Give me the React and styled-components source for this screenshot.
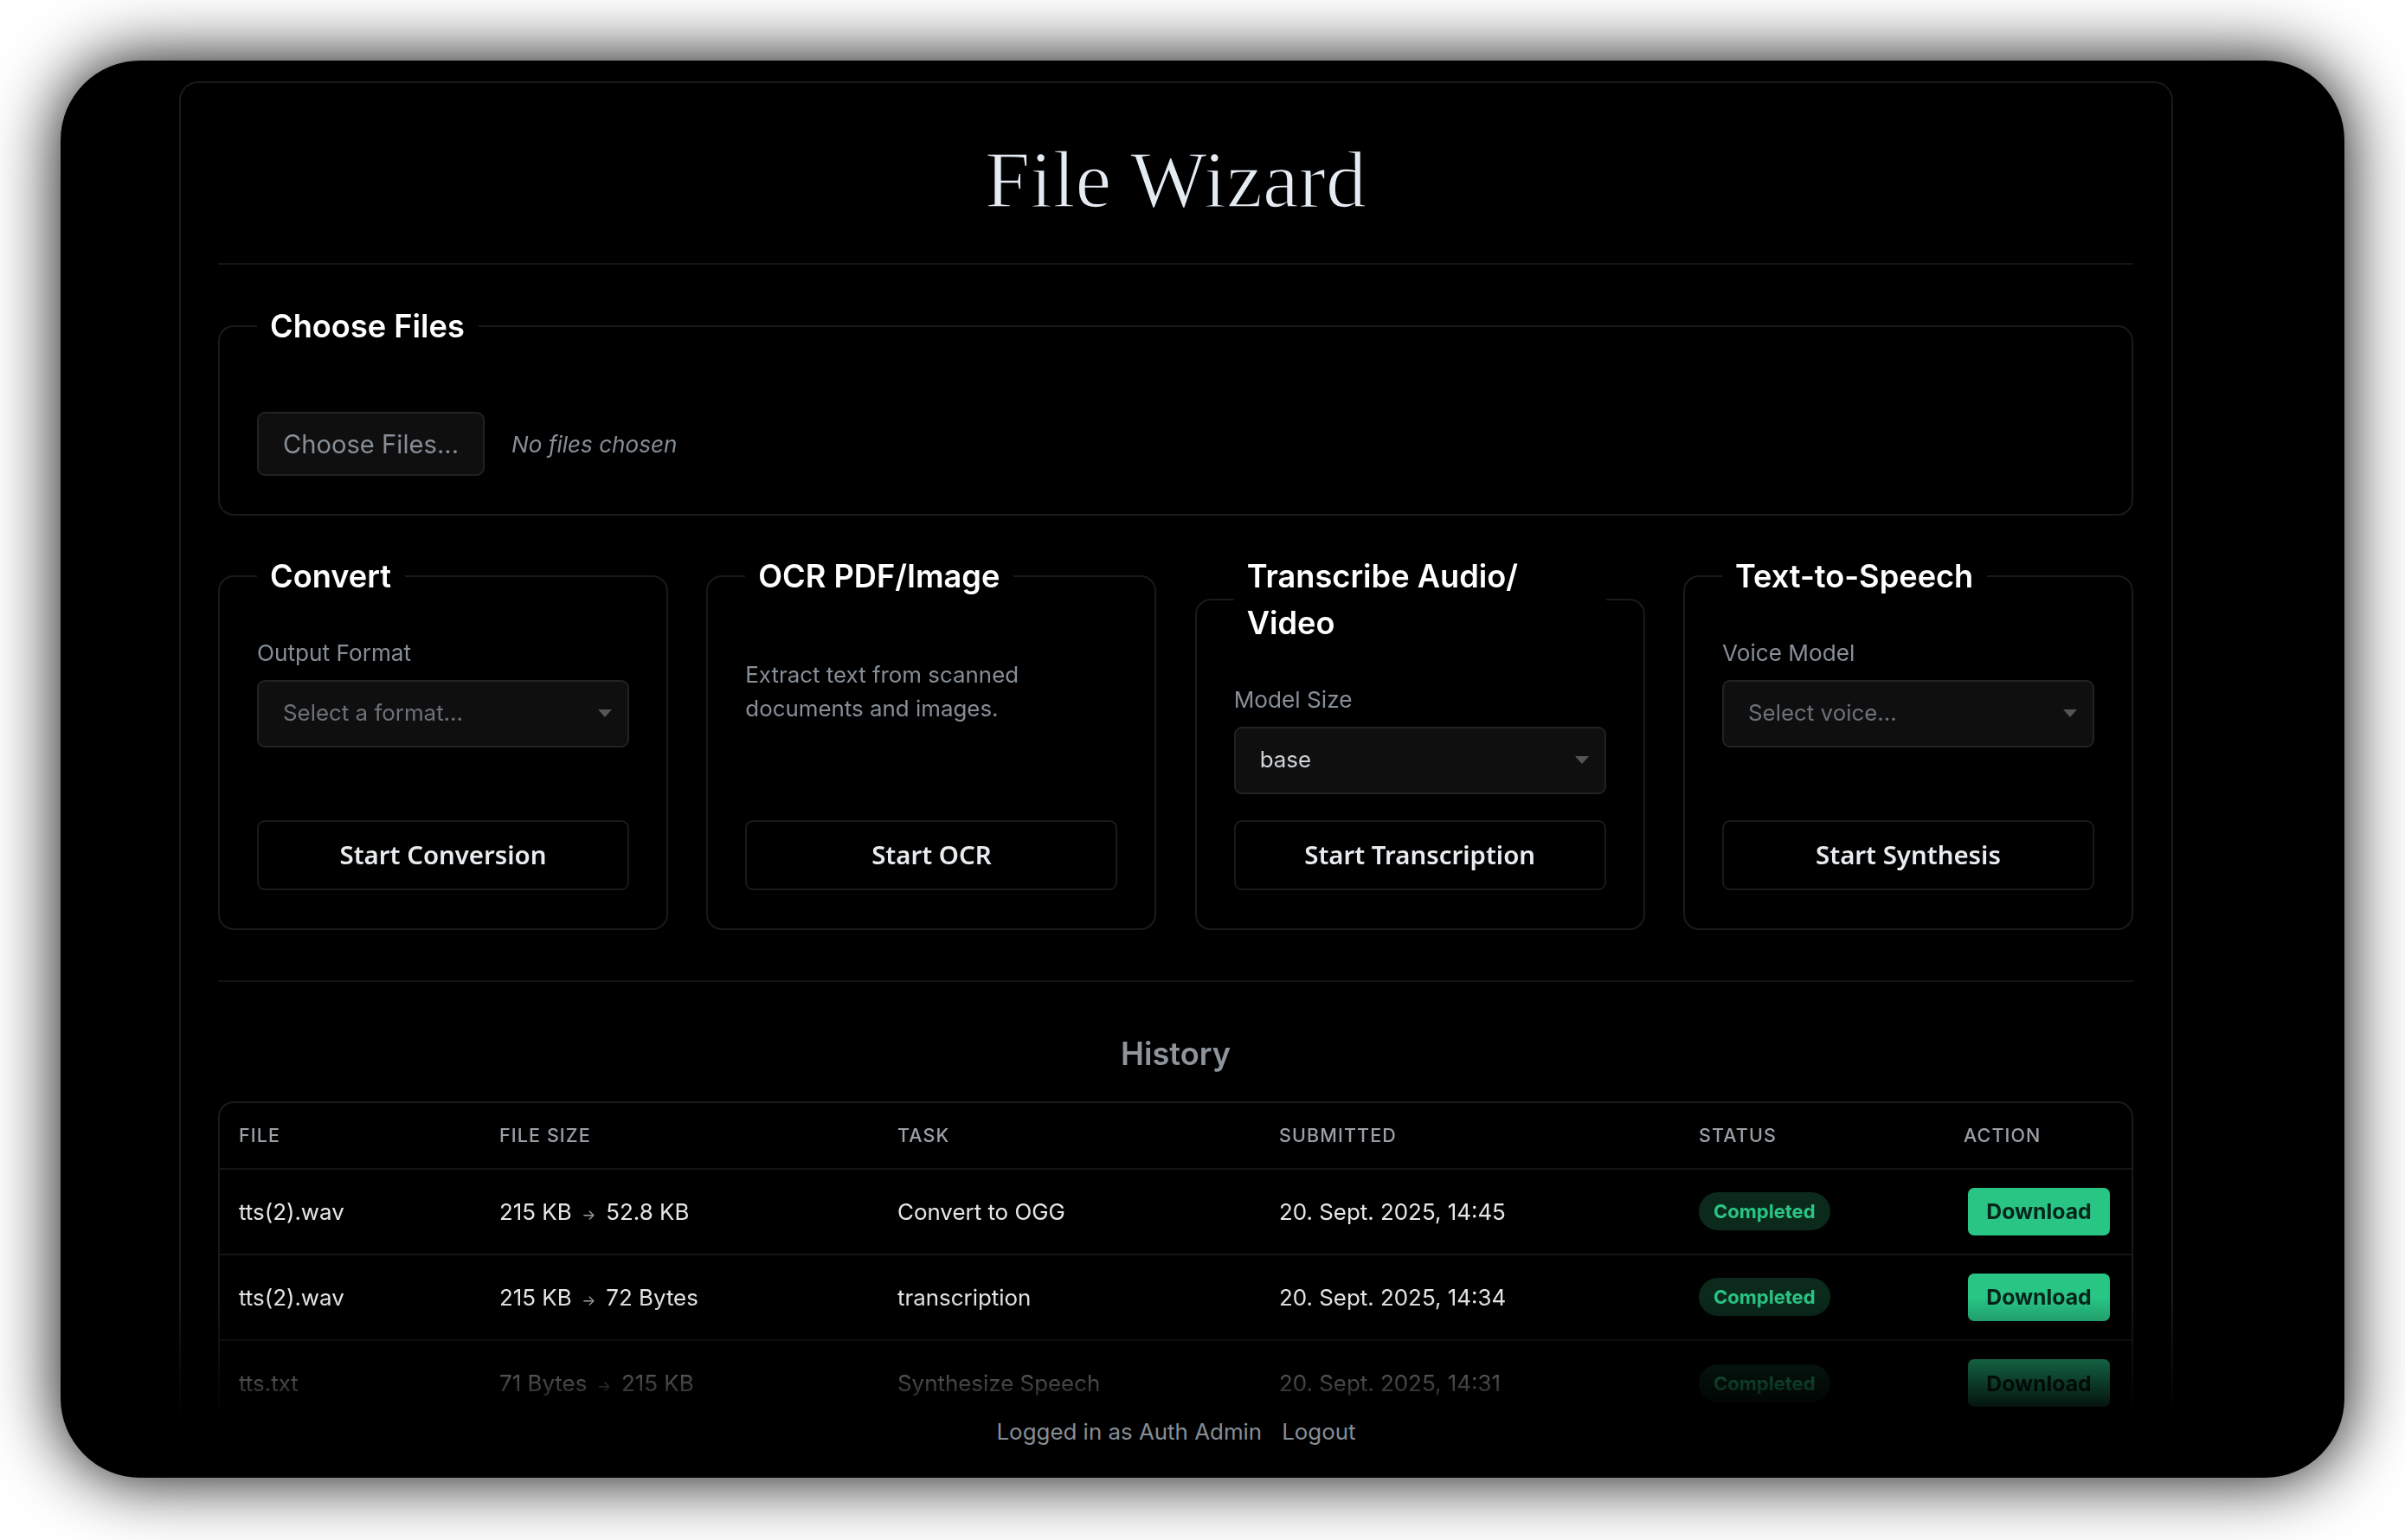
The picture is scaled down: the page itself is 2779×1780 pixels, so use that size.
import styled, { createGlobalStyle } from "styled-components"

const GlobalStyle = createGlobalStyle`
  html, body {
    margin: 0;
    padding: 0;
    background: #fff;
  }
  * {
    box-sizing: border-box;
  }
`

const Stage = styled.div`
  width: 2779px;
  height: 1780px;
  padding: 70px 70px 72px;
  overflow: hidden;
  font-family: Inter, "Liberation Sans", sans-serif;
`

const Screen = styled.div`
  height: 100%;
  display: flex;
  flex-direction: column;
  padding-right: 61px;
  background: #000;
  border-radius: 92px;
  box-shadow: 0 0 80px #000;
  overflow: hidden;
`

const Scroller = styled.div`
  height: 1570px;
  padding-top: 24px;
  overflow: hidden;
  mask-image: linear-gradient(to bottom, #000 1430px, transparent 1570px);
`

const Frame = styled.main`
  width: 2304px;
  margin: 0 auto;
  padding: 0 44px 80px 43px;
  border: 2px solid #1a1a1a;
  border-radius: 22px;
`

const Header = styled.header`
  height: 210px;
  padding-top: 14px;
  display: flex;
  align-items: center;
  justify-content: center;
  border-bottom: 2px solid #141414;
  margin-bottom: 44px;
`

const Title = styled.h1`
  margin: 0;
  font-family: "Liberation Serif", serif;
  font-size: 94px;
  font-weight: 400;
  color: #e4ebf2;
  -webkit-text-stroke: 1.6px #000;
`

const Panel = styled.fieldset`
  min-width: 0;
  margin: 0;
  padding: 42px 43px 44px;
  display: flex;
  flex-direction: column;
  border: 2px solid #1a1a1a;
  border-radius: 18px;
`

const PanelTitle = styled.legend`
  padding: 0 16px 0 15px;
  font-size: 36.2px;
  line-height: 54px;
  font-weight: 600;
  color: #fff;
`

const FileRow = styled.div`
  display: flex;
  align-items: center;
  gap: 31px;
  margin-top: 30px;
`

const FileButton = styled.button`
  width: 263px;
  height: 74px;
  background: #0f0f0f;
  border: 2px solid #222;
  border-radius: 9px;
  font: 400 29.2px Inter, sans-serif;
  color: #868e96;
`

const FileNote = styled.span`
  font-size: 26.1px;
  font-style: italic;
  color: #868e96;
`

const Tools = styled.div`
  display: grid;
  grid-template-columns: repeat(4, 1fr);
  gap: 44.3px;
  margin-top: 42.5px;
`

const Field = styled.div`
  margin-bottom: 30px;
`

const Label = styled.label`
  display: block;
  margin-bottom: 11px;
  font-size: 26.2px;
  line-height: 40px;
  color: #868e96;
`

const SelectWrap = styled.div`
  position: relative;

  &::after {
    content: "";
    position: absolute;
    right: 20px;
    top: 34px;
    border-left: 8px solid transparent;
    border-right: 8px solid transparent;
    border-top: 9px solid #555;
  }
`

const Select = styled.select`
  display: block;
  width: 100%;
  height: 78px;
  padding: 0 28px 2px;
  appearance: none;
  background: #0f0f0f;
  border: 2px solid #222;
  border-radius: 9px;
  font: 400 25.9px Inter, sans-serif;
  color: ${(p) => (p.$placeholder ? "#6c7278" : "#d0d4d8")};
`

const Blurb = styled.p`
  margin: 25px 0 30px;
  font-size: 25.9px;
  line-height: 39px;
  color: #868e96;
`

const StartButton = styled.button`
  width: 100%;
  height: 81px;
  margin-top: auto;
  background: #000;
  border: 2px solid #1a1a1a;
  border-radius: 9px;
  font: 600 29.4px "Noto Sans", sans-serif;
  color: #e9ecef;
`

const Rule = styled.hr`
  margin: 58px 0 0;
  border: 0;
  border-top: 2px solid #141414;
`

const HistoryTitle = styled.h2`
  margin: 57px 0 28px;
  text-align: center;
  font-size: 36.2px;
  line-height: 53px;
  font-weight: 600;
  color: #8d949b;
`

const TableWrap = styled.div`
  border: 2px solid #1a1a1a;
  border-radius: 18px;
  overflow: hidden;
`

const Table = styled.table`
  width: 100%;
  table-layout: fixed;
  border-collapse: collapse;
`

const Th = styled.th`
  height: 76px;
  padding: 0 22px;
  text-align: left;
  font-size: 21.5px;
  font-weight: 500;
  letter-spacing: 1.1px;
  text-transform: uppercase;
  color: #9aa0a6;
  border-bottom: 2px solid #141414;
`

const Row = styled.tr`
  & + & td {
    border-top: 2px solid #141414;
  }
`

const Td = styled.td`
  height: 99px;
  padding: 0 ${(p) => (p.$action ? "25px" : "22px")};
  text-align: ${(p) => (p.$action ? "right" : "left")};
  font-size: 25.9px;
  color: #e6e6e6;
`

const Arrow = styled.span`
  display: inline-block;
  width: 25px;
  text-align: center;
  font-size: 17px;
  color: #9aa0a6;
`

const Badge = styled.span`
  display: inline-flex;
  align-items: center;
  height: 44px;
  padding: 0 17px;
  background: #0b2a1c;
  border-radius: 22px;
  font-size: 22px;
  font-weight: 700;
  color: #2ac583;
`

const DownloadButton = styled.button`
  width: 164px;
  height: 55px;
  background: #28c585;
  border: 0;
  border-radius: 7px;
  font: 700 24.8px Inter, sans-serif;
  color: #06251a;
`

const Footer = styled.footer`
  display: flex;
  justify-content: center;
  gap: 23px;
  font-size: 25.9px;
  line-height: 30px;
  color: #868e96;
`

const columns = [
  ["File", 301],
  ["File Size", 460],
  ["Task", 441],
  ["Submitted", 485],
  ["Status", 306],
  ["Action", 216],
]

const jobs = [
  { file: "tts(2).wav", from: "215 KB", to: "52.8 KB", task: "Convert to OGG", date: "20. Sept. 2025, 14:45" },
  { file: "tts(2).wav", from: "215 KB", to: "72 Bytes", task: "transcription", date: "20. Sept. 2025, 14:34" },
  { file: "tts.txt", from: "71 Bytes", to: "215 KB", task: "Synthesize Speech", date: "20. Sept. 2025, 14:31" },
]

const ToolSelect = ({ label, value, placeholder }) => (
  <Field>
    <Label>{label}</Label>
    <SelectWrap>
      <Select $placeholder={placeholder} defaultValue={value}>
        <option>{value}</option>
      </Select>
    </SelectWrap>
  </Field>
)

const App = () => (
  <Stage>
    <GlobalStyle />
    <Screen>
      <Scroller>
        <Frame>
          <Header>
            <Title>File Wizard</Title>
          </Header>

          <Panel>
            <PanelTitle>Choose Files</PanelTitle>
            <FileRow>
              <FileButton>Choose Files...</FileButton>
              <FileNote>No files chosen</FileNote>
            </FileRow>
          </Panel>

          <Tools>
            <Panel>
              <PanelTitle>Convert</PanelTitle>
              <ToolSelect label="Output Format" value="Select a format..." placeholder />
              <StartButton>Start Conversion</StartButton>
            </Panel>
            <Panel>
              <PanelTitle>OCR PDF/Image</PanelTitle>
              <Blurb>Extract text from scanned documents and images.</Blurb>
              <StartButton>Start OCR</StartButton>
            </Panel>
            <Panel>
              <PanelTitle>Transcribe Audio/ Video</PanelTitle>
              <ToolSelect label="Model Size" value="base" />
              <StartButton>Start Transcription</StartButton>
            </Panel>
            <Panel>
              <PanelTitle>Text-to-Speech</PanelTitle>
              <ToolSelect label="Voice Model" value="Select voice..." placeholder />
              <StartButton>Start Synthesis</StartButton>
            </Panel>
          </Tools>

          <Rule />

          <HistoryTitle>History</HistoryTitle>
          <TableWrap>
            <Table>
              <colgroup>
                {columns.map(([name, width]) => (
                  <col key={name} width={width} />
                ))}
              </colgroup>
              <thead>
                <tr>
                  {columns.map(([name]) => (
                    <Th key={name}>{name}</Th>
                  ))}
                </tr>
              </thead>
              <tbody>
                {jobs.map((job) => (
                  <Row key={job.date}>
                    <Td>{job.file}</Td>
                    <Td>
                      {job.from} <Arrow>→</Arrow> {job.to}
                    </Td>
                    <Td>{job.task}</Td>
                    <Td>{job.date}</Td>
                    <Td>
                      <Badge>Completed</Badge>
                    </Td>
                    <Td $action>
                      <DownloadButton>Download</DownloadButton>
                    </Td>
                  </Row>
                ))}
              </tbody>
            </Table>
          </TableWrap>
        </Frame>
      </Scroller>
      <Footer>
        <span>Logged in as Auth Admin</span>
        <span>Logout</span>
      </Footer>
    </Screen>
  </Stage>
)

export default App
